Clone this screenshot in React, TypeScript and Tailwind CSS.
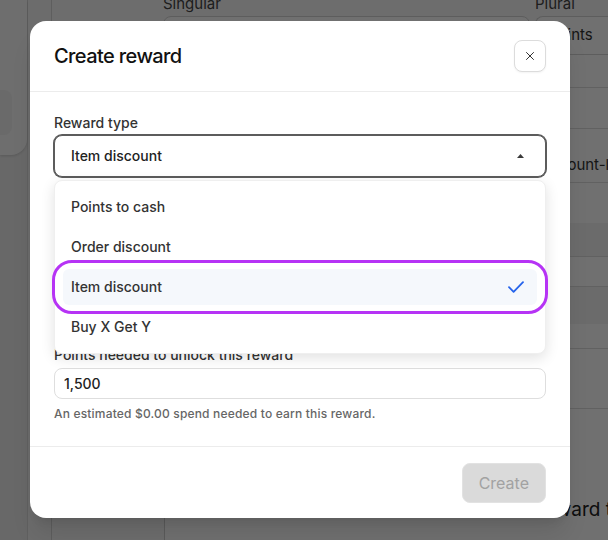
import { X } from 'lucide-react';

const options = ['Points to cash', 'Order discount', 'Item discount', 'Buy X Get Y'];
const selected = 'Item discount';

function PageBehind() {
  return (
    <div className="flex h-[540px] w-[608px] overflow-hidden bg-white">
      <div className="flex w-[52px] shrink-0 border-r border-[#d6d6d6] bg-[#ededed]">
        <div className="w-[28px] border-r border-[#dadada]">
          <div className="h-[155px] rounded-br-2xl bg-[#fbfbfb] pt-[90px] shadow-[0_1px_3px_rgba(0,0,0,0.15)]">
            <div className="h-[45px] w-[12px] rounded-r-lg bg-[#f1f1f1]" />
          </div>
        </div>
        <div className="flex-1 bg-[#f6f6f6]" />
      </div>
      <div className="flex flex-1 flex-col bg-[#f8f8f8]">
        <div className="-mt-[8px] flex gap-[5px] pl-[111px]">
          <div className="w-[367px]">
            <div className="text-[15px] leading-6 text-[#444]">Singular</div>
            <div className="h-[39px] rounded-lg border border-[#d4d4d4] bg-white" />
          </div>
          <div className="flex-1">
            <div className="text-[15px] leading-6 text-[#444]">Plural</div>
            <div className="flex h-[39px] items-center rounded-l-lg border border-r-0 border-[#d4d4d4] bg-white pl-[13px] text-[15px] text-[#333]">
              Points
            </div>
          </div>
        </div>
        <div className="ml-[112px] flex flex-1 flex-col border-l border-[#d0d0d0] bg-white">
          <div className="h-[33px] border-b border-[#dcdcdc]" />
          <div className="h-[41px] border-b border-[#dcdcdc]" />
          <div className="flex h-[54px] items-end justify-end overflow-hidden border-b border-[#dcdcdc] pb-[6px] text-[15px] text-[#333]">
            <span className="-mr-[10px] whitespace-nowrap">Discount-le</span>
          </div>
          <div className="h-[40px]" />
          <div className="h-[34px] border-b border-[#dcdcdc] bg-[#f3f3f3]" />
          <div className="h-[30px] border-b border-[#dcdcdc]" />
          <div className="h-[37px] bg-[#f3f3f3]" />
          <div className="h-[25px] border-b border-[#dcdcdc]" />
          <div className="h-[60px] border-b border-[#dcdcdc]" />
          <div className="flex flex-1 items-end justify-end overflow-hidden pb-[16px] text-[19px] text-[#222]">
            <span className="-mr-[4px] whitespace-nowrap">reward t</span>
          </div>
        </div>
      </div>
    </div>
  );
}

function Caret() {
  return (
    <svg width="7" height="4" viewBox="0 0 7 4" className="text-[#3a3a3a]">
      <path d="M0 4 L3.5 0 L7 4 Z" fill="currentColor" />
    </svg>
  );
}

function CheckMark() {
  return (
    <svg width="16" height="12" viewBox="0 0 16 12" fill="none" className="text-[#2563eb]">
      <path d="M1 6.2 L5.6 10.8 L15 1.2" stroke="currentColor" strokeWidth="1.8" strokeLinecap="round" strokeLinejoin="round" />
    </svg>
  );
}

export default function App() {
  return (
    <div className="relative h-[540px] w-[608px] overflow-hidden font-['Inter',sans-serif]">
      <PageBehind />
      <div className="absolute inset-0 bg-black/[0.56]" />

      <div className="absolute left-[30px] top-[21px] w-[540px] rounded-2xl bg-white shadow-xl">
        <div className="flex h-[71px] items-center justify-between border-b border-[#ececec] px-6">
          <h2 className="text-[20px] font-medium tracking-[-0.6px] text-[#111]">Create reward</h2>
          <button className="flex h-8 w-8 items-center justify-center rounded-lg border border-[#dcdcdc] bg-white text-[#222] shadow-[0_1px_2px_rgba(0,0,0,0.05)]">
            <X size={14} strokeWidth={1.6} />
          </button>
        </div>

        <div className="px-6 pb-6 pt-[21px]">
          <label className="block text-sm font-medium leading-5 text-[#333]">Reward type</label>
          <div className="relative mt-0.5">
            <button className="flex h-[42px] w-full items-center justify-between rounded-lg border border-[#5c5c5c] bg-white pl-4 pr-[21px] text-sm font-medium text-[#222] shadow-[0_0_0_1px_#5c5c5c]">
              <span>{selected}</span>
              <Caret />
            </button>

            <div className="absolute left-0 right-0 top-[calc(100%+3px)] z-10 flex flex-col gap-1 rounded-lg border border-[#efefef] bg-white p-2 shadow-[0_4px_14px_rgba(0,0,0,0.12)]">
              {options.map((opt) => (
                <div
                  key={opt}
                  className={`relative flex h-9 items-center justify-between rounded-md px-2 text-sm font-medium text-[#333] ${
                    opt === selected ? 'bg-[#f5f8fc]' : ''
                  }`}
                >
                  <span>{opt}</span>
                  {opt === selected && (
                    <>
                      <span className="mr-[5px]">
                        <CheckMark />
                      </span>
                      <div className="pointer-events-none absolute -bottom-[9px] -left-[11px] -right-[11px] -top-[9px] rounded-[20px] border-[3px] border-[#b633f5]" />
                    </>
                  )}
                </div>
              ))}
            </div>
          </div>

          <div className="h-[168px]" />

          <label className="block text-sm font-medium leading-5 text-[#333]">Points needed to unlock this reward</label>
          <div className="mt-[3px] flex h-[31px] items-center rounded-lg border border-[#dedede] bg-white px-[9px] text-sm font-medium text-[#222]">
            1,500
          </div>
          <p className="mt-[7px] text-xs font-medium leading-4 tracking-[0.18px] text-[#666]">
            An estimated $0.00 spend needed to earn this reward.
          </p>
        </div>

        <div className="flex justify-end border-t border-[#ececec] px-6 pb-[15px] pt-4">
          <button className="h-10 rounded-lg border border-[#e2e2e2] bg-[#dadada] px-4 text-base text-[#a2a2a2]">
            Create
          </button>
        </div>
      </div>
    </div>
  );
}
